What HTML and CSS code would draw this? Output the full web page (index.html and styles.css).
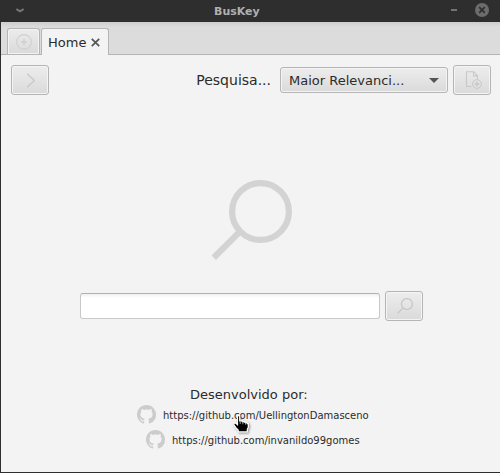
FILE: index.html
```html
<!DOCTYPE html>
<html lang="pt">
<head>
<meta charset="utf-8">
<title>BusKey</title>
<link rel="stylesheet" href="styles.css">
</head>
<body>
<div class="window">
  <header class="titlebar">
    <svg class="menu" width="8" height="5" viewBox="0 0 8 5"><path d="M.4 1 4 3.400 7.600 1" fill="none" stroke="#777" stroke-width="2"/></svg>
    <h1>BusKey</h1>
    <div class="controls">
      <i class="minimize"></i>
      <svg width="14" height="14" viewBox="0 0 14 14"><circle cx="7" cy="7" r="7" fill="#6c6c6c"/><path d="m4.200 4.200 5.600 5.600m0-5.600L4.200 9.800" stroke="#2e2e2e" stroke-width="1.700"/></svg>
    </div>
  </header>
  <nav class="tabs">
    <div class="tab add"><svg width="16" height="16" viewBox="0 0 16 16" fill="none" stroke="#d0d0d0"><circle cx="8" cy="8" r="7.400" stroke-width="1.100"/><path d="M8 5v6M5 8h6" stroke-width="1.600"/></svg></div>
    <div class="tab active"><span>Home</span><svg width="9" height="9" viewBox="0 0 9 9"><path d="m.8.8 7.400 7.400m0-7.400L.8 8.200" stroke="#555" stroke-width="1.700"/></svg></div>
  </nav>
  <div class="toolbar">
    <button class="btn next"><svg width="10" height="15" viewBox="0 0 10 15"><path d="m1.200.8 7.200 6.700-7.200 6.700" fill="none" stroke="#c8c8c8" stroke-width="1.200"/></svg></button>
    <span class="label">Pesquisa...</span>
    <div class="select"><span>Maior Relevanci...</span><i class="arrow"></i></div>
    <button class="btn next"><svg width="17" height="18" viewBox="0 0 17 18" fill="none" stroke="#c8c8c8"><path d="M6.500 15.500h-5V.7h7.200l3.800 4v3M8.500.7v4.200h4" stroke-width="1.100"/><circle cx="12" cy="13" r="4.400"/><path d="M12 10.500v5M9.500 13h5" stroke-width="1.500"/></svg></button>
  </div>
  <main>
    <svg class="logo" width="82" height="82" viewBox="0 0 82 82" fill="none" stroke="#d3d3d3"><circle cx="49.500" cy="32.500" r="28.400" stroke-width="6.200"/><path d="M29.500 52 2.700 78.700" stroke-width="6.200"/></svg>
    <div class="search">
      <input type="text" aria-label="Pesquisa">
      <button class="btn next"><svg width="16" height="16" viewBox="0 0 16 16" fill="none" stroke="#c8c8c8"><circle cx="9.900" cy="6.100" r="5.500" stroke-width="1.300"/><path d="M6 10 .7 15.300" stroke-width="1.300"/></svg></button>
    </div>
  </main>
  <footer>
    <p class="credit">Desenvolvido por:</p>
    <div class="link first"><svg class="gh" width="19" height="19" viewBox="0 0 16 16"><path d="M8 0C3.580 0 0 3.580 0 8c0 3.540 2.290 6.530 5.470 7.590.4.070.55-.17.55-.38 0-.19-.01-.82-.01-1.490-2.010.37-2.530-.49-2.690-.94-.09-.23-.48-.94-.82-1.130-.28-.15-.68-.52-.01-.53.63-.01 1.080.58 1.230.82.72 1.210 1.870.87 2.330.66.070-.52.28-.87.51-1.070-1.780-.2-3.640-.89-3.640-3.950 0-.87.31-1.590.82-2.150-.08-.2-.36-1.020.08-2.120 0 0 .67-.21 2.200.82.64-.18 1.320-.27 2-.27s1.360.09 2 .27c1.530-1.040 2.200-.82 2.200-.82.44 1.100.16 1.920.08 2.120.51.56.82 1.270.82 2.150 0 3.070-1.870 3.750-3.650 3.950.29.25.54.73.54 1.480 0 1.070-.01 1.930-.01 2.200 0 .21.15.46.55.38A8.010 8.010 0 0 0 16 8c0-4.420-3.580-8-8-8z" fill="#ccc"/></svg><span>https://github.com/UellingtonDamasceno</span></div>
    <div class="link second"><svg class="gh" width="19" height="19" viewBox="0 0 16 16"><path d="M8 0C3.580 0 0 3.580 0 8c0 3.540 2.290 6.530 5.470 7.590.4.070.55-.17.55-.38 0-.19-.01-.82-.01-1.490-2.010.37-2.530-.49-2.690-.94-.09-.23-.48-.94-.82-1.130-.28-.15-.68-.52-.01-.53.63-.01 1.080.58 1.230.82.72 1.210 1.870.87 2.330.66.070-.52.28-.87.51-1.070-1.780-.2-3.640-.89-3.640-3.950 0-.87.31-1.590.82-2.150-.08-.2-.36-1.020.08-2.120 0 0 .67-.21 2.200.82.64-.18 1.320-.27 2-.27s1.360.09 2 .27c1.530-1.040 2.200-.82 2.200-.82.44 1.100.16 1.920.08 2.120.51.56.82 1.270.82 2.150 0 3.070-1.870 3.750-3.650 3.950.29.25.54.73.54 1.480 0 1.070-.01 1.930-.01 2.200 0 .21.15.46.55.38A8.010 8.010 0 0 0 16 8c0-4.420-3.580-8-8-8z" fill="#ccc"/></svg><span>https://github.com/invanildo99gomes</span></div>
  </footer>
  <svg class="cursor" width="17" height="18" viewBox="0 0 17 18"><path d="M4.500.7h2.200v5.200h2.600v.7h2.600v.8h2.200v1.200h1.200v4l-1 1.500v2.800H5.200v-1.800L3.500 13.500.8 9.700V8.200h2l1.700 1.500z" fill="#000" stroke="#fff" stroke-width="1.200"/><path d="M7.200 6.500v2.500M9.900 7v2.300M12.500 7.800v1.800" stroke="#ccc" stroke-width=".8"/></svg>
</div>
</body>
</html>
```
FILE: styles.css
```css
* { box-sizing: border-box; }
body { margin: 0; font-family: "DejaVu Sans", sans-serif; color: #2b2b2b; }
svg { display: block; flex: none; }
.window { position: relative; width: 500px; height: 473px; display: flex; flex-direction: column; background: #f3f3f3; border-left: 1px solid #2e2e2e; border-bottom: 1px solid #2e2e2e; overflow: hidden; }
.titlebar { height: 22px; margin-left: -1px; flex: none; display: flex; align-items: center; background: #2e2e2e; padding: 0 11px 2px 16px; }
.titlebar h1 { margin: 4px 0 0 190px; font: bold 11px/16px "DejaVu Sans", sans-serif; color: #b0b0b0; }
.controls { margin-left: auto; display: flex; align-items: center; gap: 18px; }
.minimize { width: 6px; height: 2px; background: #747474; }
.tabs { height: 33px; flex: none; display: flex; align-items: flex-end; gap: 1px; padding-left: 6px; background: linear-gradient(#cdcdcd, #dcdcdc 5px); border-bottom: 1px solid #b5b5b5; }
.tab { height: 26px; border: 1px solid #b5b5b5; border-bottom: 0; border-radius: 3px 3px 0 0; display: flex; align-items: center; }
.add { width: 33px; justify-content: center; background: linear-gradient(#ececec, #dadada); box-shadow: inset 0 0 0 1px #f3f3f3; }
.active { width: 68px; height: 27px; margin-bottom: -1px; padding-left: 6px; gap: 5px; background: #f3f3f3; font-size: 13px; }
.toolbar { display: flex; align-items: center; padding: 10px 9px 0 10px; height: 40px; flex: none; }
.btn { width: 38px; height: 30px; padding: 0; border: 1px solid #b5b5b5; border-radius: 3px; background: linear-gradient(#ededed, #dadada); box-shadow: inset 0 0 0 1px #f4f4f4; display: flex; align-items: center; justify-content: center; flex: none; }
.next { padding-left: 2px; }
.label { margin-left: auto; margin-right: 9px; font-size: 14px; }
.select { width: 168px; height: 26px; margin-right: 5px; padding: 0 8px; display: flex; align-items: center; justify-content: space-between; border: 1px solid #b5b5b5; border-radius: 3px; background: linear-gradient(#ededed, #dadada); box-shadow: inset 0 0 0 1px #f4f4f4; font-size: 13px; }
.arrow { border: 5px solid transparent; border-top-color: #555; border-bottom: 0; }
main { height: 226px; flex: none; }
.logo { margin: 84px 0 0 210px; }
.search { display: flex; align-items: center; gap: 5px; margin: 30px 0 0 79px; }
.search input { width: 300px; height: 26px; border: 1px solid #c8c8c8; border-top-color: #b1b1b1; border-radius: 3px; background: linear-gradient(#f0f0f0, #fff 4px); }
footer { padding-top: 64px; }
.credit { margin: 0 0 -2px 189px; font-size: 13px; line-height: 20px; }
.link { display: flex; align-items: center; height: 25px; gap: 7px; font-size: 10px; white-space: nowrap; }
.gh { margin-top: -2px; }
.first { padding-left: 136px; }
.second { padding-left: 145px; }
.cursor { position: absolute; left: 232px; top: 415px; filter: drop-shadow(1px 1px 1px #0006); }
```
